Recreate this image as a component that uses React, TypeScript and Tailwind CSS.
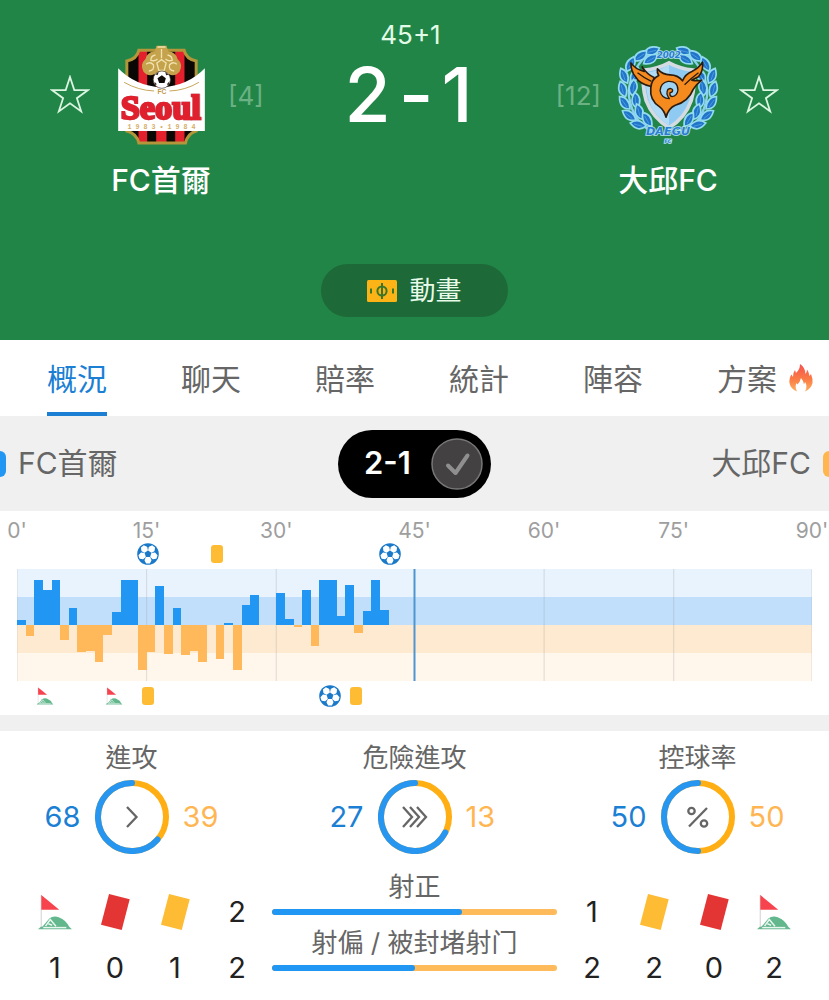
import { useState } from "react";

const SLOTS = 92;

// attack momentum per minute: positive = home, negative = away
const momentum = [
  5, -11, 45, 35, 45, -15, 17, -27, -26, -37, -10, 13, 45, 45, -45, -27, 39, -29, 17, -30, -26, -37, 0, -34, 2, -45,
  20, 30, 0, 0, 32, 6, -2, 35, -21, 45, 45, 9, 40, -8, 14, 45, 15,
];

const axis = [
  { label: "0'", slot: 0 },
  { label: "15'", slot: 15 },
  { label: "30'", slot: 30 },
  { label: "45'", slot: 46 },
  { label: "60'", slot: 61 },
  { label: "75'", slot: 76 },
  { label: "90'", slot: 92 },
];

type EventKind = "goal" | "card" | "corner";

const homeEvents: { kind: EventKind; slot: number }[] = [
  { kind: "goal", slot: 15.2 },
  { kind: "card", slot: 23.2 },
  { kind: "goal", slot: 43.2 },
];

const awayEvents: { kind: EventKind; slot: number }[] = [
  { kind: "corner", slot: 3.2 },
  { kind: "corner", slot: 11.2 },
  { kind: "card", slot: 15.2 },
  { kind: "goal", slot: 36.2 },
  { kind: "card", slot: 39.2 },
];

const tabs = ["概況", "聊天", "賠率", "統計", "陣容", "方案"];

const StarButton = ({ label }: { label: string }) => (
  <button type="button" aria-label={label} className="block size-10">
    <svg viewBox="0 0 40 40" className="size-10" fill="none" stroke="#daf5e0" strokeWidth="1.8">
      <polygon points="20,2 24.3,15.1 38.1,15.1 26.9,23.2 31.2,36.4 20,28.3 8.8,36.4 13.1,23.2 1.9,15.1 15.7,15.1" />
    </svg>
  </button>
);

const SeoulCrest = () => (
  <svg viewBox="0 0 260 300" className="h-[100px] w-[87px]" role="img" aria-label="FC首爾">
    <defs>
      <clipPath id="seoul-shield">
        <path d="M62 16H198Q204 42 234 48V258Q208 266 202 294H62Q56 266 26 258V48Q56 42 62 16Z" />
      </clipPath>
    </defs>
    <g clipPath="url(#seoul-shield)">
      <rect width="260" height="300" fill="#e4202c" />
      <path d="M26 0H61V300H26ZM87 0H114V300H87ZM145 0H171V300H145ZM199 0H234V300H199Z" fill="#0b0705" />
    </g>
    <path
      d="M62 16H198Q204 42 234 48V258Q208 266 202 294H62Q56 266 26 258V48Q56 42 62 16Z"
      fill="none"
      stroke="#b3963a"
      strokeWidth="9"
    />
    <path
      d="M115 2H145L150 18Q174 22 178 42Q196 58 184 80Q170 96 152 88L130 100L108 88Q90 96 76 80Q64 58 82 42Q86 22 110 18Z"
      fill="#c5a24c"
    />
    <g fill="none" stroke="#f1e2ae" strokeWidth="4">
      <path d="M118 6H142M130 12V40M112 30Q98 32 98 46Q110 50 118 42M148 30Q162 32 162 46Q150 50 142 42" />
      <path d="M84 58Q96 48 106 60Q110 76 92 78M176 58Q164 48 154 60Q150 76 168 78" />
      <path d="M116 54L130 44L144 54L138 76H122Z" />
    </g>
    <path d="M0 70Q50 122 130 128Q210 122 260 70V258H0Z" fill="#fff" />
    <circle cx="131" cy="104" r="26" fill="#fff" stroke="#40352c" strokeWidth="2" />
    <path d="M131 91L143 100L139 114H123L118 100Z" fill="#100c0a" />
    <path d="M112 88L122 81L118 91ZM141 81L151 89L144 91ZM109 110L116 118L110 120ZM146 118L154 109L151 121Z" fill="#2a211c" />
    <path d="M18 112Q60 136 108 138M154 138Q202 136 242 112" fill="none" stroke="#c8a658" strokeWidth="3" />
    <text x="131" y="148" textAnchor="middle" fontSize="20" className="font-['Liberation_Sans'] font-bold" fill="#c09a45">
      FC
    </text>
    <text
      x="128"
      y="223"
      fontSize="103"
      textAnchor="middle"
      fill="#e0202d"
      stroke="#e0202d"
      strokeWidth="7"
      className="font-['Liberation_Serif',serif] font-bold drop-shadow-[1px_0_0_#a4a7ad]"
    >
      Seoul
    </text>
    <text x="130" y="251" textAnchor="middle" fontSize="20" className="font-['Liberation_Mono'] font-bold" fill="#d5ad63">
      1 9 8 3 • 1 9 8 4
    </text>
  </svg>
);

// left half of the laurel wreath, mirrored for the right half
const leaves = [
  [106, 15, -15], [72, 30, -35], [102, 40, -30], [42, 54, -60], [20, 90, 70], [56, 88, -60],
  [16, 130, 75], [50, 124, -80], [22, 172, 55], [56, 164, 85], [36, 210, 38], [66, 198, 75],
  [64, 238, 15], [90, 222, 60],
];

const Wreath = () => (
  <g>
    <path d="M112 260Q48 232 36 150Q32 84 92 24" fill="none" stroke="#8cd0f0" strokeWidth="7" />
    {leaves.map(([x, y, r]) => (
      <g key={`${x}-${y}`} transform={`translate(${x} ${y}) rotate(${r})`}>
        <path d="M-25 0Q-6 -24 24 -4Q6 23 -25 0Z" fill="#2174c8" stroke="#92daf0" strokeWidth="5" />
        <path d="M-13 0H13" stroke="#58a8ea" strokeWidth="2" />
      </g>
    ))}
  </g>
);

const DaeguCrest = () => (
  <svg viewBox="0 0 308 294" className="h-[98px] w-[102px]" role="img" aria-label="大邱FC">
    <Wreath />
    <g transform="matrix(-1 0 0 1 308 0)">
      <Wreath />
    </g>
    <path
      d="M157 50Q190 68 230 72Q238 116 224 164Q206 216 157 246Q108 216 88 164Q74 116 82 72Q124 68 157 50Z"
      fill="#8fcaf2"
      stroke="#d5dbe3"
      strokeWidth="11"
    />
    <path d="M157 56V238Q112 210 96 164Q84 118 88 80Q126 76 157 56Z" fill="#c9e8f9" opacity="0.6" />
    <g fill="#f58a1f" stroke="#2b1c10" strokeWidth="5" strokeLinejoin="round">
      <path d="M42 50Q56 70 82 76L76 62Q92 86 112 94L106 122Q68 114 56 92Q42 76 42 50Z" />
      <path d="M258 48Q262 74 246 92L226 102Q242 106 256 102Q240 114 230 130Q216 166 176 178Q156 186 148 214Q142 192 128 182Q98 162 102 126Q104 98 126 88Q120 80 122 68Q138 86 160 86Q184 86 198 104Q206 84 226 76Q248 66 258 48Z" />
      <path d="M62 80Q82 96 104 106M204 116Q222 98 246 80" fill="none" strokeWidth="4" />
    </g>
    <path
      d="M154 106Q184 104 184 132Q182 150 166 152Q158 150 160 140Q168 140 168 132Q164 124 154 130Q146 142 158 158Q134 158 130 134Q132 110 154 106Z"
      fill="#9fd3f3"
      stroke="#2b1c10"
      strokeWidth="4"
      strokeLinejoin="round"
    />
    <g
      className="font-['DejaVu_Sans'] font-bold italic"
      textAnchor="middle"
      fill="#2b7ed0"
      stroke="#b5e1f5"
      strokeWidth="5"
      paintOrder="stroke"
    >
      <text x="156" y="35" fontSize="26">
        2002
      </text>
      <text x="154" y="268" fontSize="34">
        DAEGU
      </text>
      <text x="154" y="292" fontSize="15">
        FC
      </text>
    </g>
  </svg>
);

const PitchIcon = () => (
  <svg viewBox="0 0 30 22" className="h-[22px] w-[30px]" aria-hidden="true">
    <rect width="30" height="22" rx="1.5" fill="#fcb316" />
    <g fill="none" stroke="#39752b" strokeWidth="2">
      <circle cx="15" cy="11" r="4.6" />
      <path d="M15 3V19M4 8.5V13.5M26 8.5V13.5" />
    </g>
  </svg>
);

const FlameIcon = () => (
  <svg viewBox="0 0 24 28" className="h-7 w-6" aria-hidden="true">
    <defs>
      <linearGradient id="flame" x1="0" y1="0" x2="0" y2="1">
        <stop offset="0" stopColor="#f6524f" />
        <stop offset="0.55" stopColor="#fa7b45" />
        <stop offset="1" stopColor="#fdb060" />
      </linearGradient>
    </defs>
    <path
      d="M11 0Q16 3 16.500 10Q18 9 18 5.500Q20 8 20.500 12L22 10Q24 15 23.500 19Q22 25 16 27.500Q19 22 16 18L15 20.500Q14 16 12 14Q11 18 8.500 20.500L7.500 19Q5.500 23 8 27.500Q1.500 25 .5 19Q0 14 2.500 10.500L4 13Q4 8.500 6 6L7 9Q11 5.500 11 0Z"
      fill="url(#flame)"
    />
  </svg>
);

const BallIcon = () => (
  <svg viewBox="0 0 22 22" className="size-[22px]" role="img" aria-label="入球">
    <circle cx="11" cy="11" r="10.8" fill="#1a79c8" />
    <g fill="#fff" stroke="#fff" strokeWidth="1.4" strokeLinejoin="round">
      {[18, 90, 162, 234, 306].map((angle) => (
        <path
          key={angle}
          transform={`rotate(${angle} 11 11)`}
          d="M14.600 9.400L17.200 8.200L19.800 9.600V12.400L17.200 13.800L14.600 12.600Z"
        />
      ))}
    </g>
  </svg>
);

const CornerIcon = ({ className }: { className: string }) => (
  <svg viewBox="0 0 36 38" className={className} role="img" aria-label="角球">
    <path d="M3.500 1V36" stroke="#dcdcdc" strokeWidth="1.400" />
    <path d="M3.500 1L22.500 16.500H3.500Z" fill="#f6434d" />
    <path d="M4 35.500L12 26Q16 22.500 22 24.500Q30 27.500 33.500 35.500Z" fill="#62b78d" />
    <path d="M0 37.200L3 34.500H33L36 37.200Z" fill="#69b791" />
    <path d="M5.500 35.500H30" stroke="#e9f6ef" strokeWidth="1.500" />
    <path d="M8 34L13 27L19 34M11 31.500L15 33" fill="none" stroke="#e9f6ef" strokeWidth="1.600" />
  </svg>
);

const CardIcon = ({ color, label }: { color: string; label: string }) => (
  <svg viewBox="0 0 29 36" className="h-9 w-[29px]" role="img" aria-label={label}>
    <polygon points="8,0 28.700,5.300 20.700,36 0,30.700" fill={color} />
  </svg>
);

const EventRow = ({ events }: { events: { kind: EventKind; slot: number }[] }) => (
  <div className="relative h-[22px]">
    {events.map(({ kind, slot }) => (
      <div
        key={`${kind}-${slot}`}
        className="absolute inset-y-0 flex -translate-x-1/2 items-center"
        style={{ left: `${(slot / SLOTS) * 100}%` }}
      >
        {kind === "goal" && <BallIcon />}
        {kind === "card" && <span className="h-[18px] w-3 rounded-[3px] bg-[#fdbc34]" />}
        {kind === "corner" && <CornerIcon className="h-[18px] w-[17px]" />}
      </div>
    ))}
  </div>
);

const MomentumChart = () => (
  <svg viewBox="0 0 92 112" preserveAspectRatio="none" className="block h-[112px] w-full" role="img" aria-label="攻勢走勢">
    <rect width="92" height="28" fill="#e8f3fe" />
    <rect y="28" width="92" height="28" fill="#c1dffa" />
    <rect y="56" width="92" height="28" fill="#fdead1" />
    <rect y="84" width="92" height="28" fill="#fff6ec" />
    {axis.map(({ slot }) => (
      <path key={slot} d={`M${slot} 0V112`} stroke="#8a8a8a" strokeOpacity="0.25" vectorEffect="non-scaling-stroke" />
    ))}
    <g shapeRendering="crispEdges">
      {momentum.map((value, i) => (
        <rect
          key={i}
          x={i}
          y={value > 0 ? 56 - value : 56}
          width="1"
          height={Math.abs(value)}
          fill={value > 0 ? "#2196f3" : "#ffb95a"}
        />
      ))}
    </g>
    <path d="M46 0V112" stroke="#4f95d0" strokeWidth="2" vectorEffect="non-scaling-stroke" />
  </svg>
);

const ringIcons = {
  attack: <path d="M32 27L41.500 37L32 47" />,
  danger: <path d="M25 27L34 37L25 47M32 27L41 37L32 47M39 27L48 37L39 47" />,
  possession: (
    <>
      <path d="M46 28L28 46.500" />
      <circle cx="30.500" cy="31" r="3.200" />
      <circle cx="43" cy="43.500" r="3.200" />
    </>
  ),
};

const RingStat = ({
  title,
  home,
  away,
  icon,
}: {
  title: string;
  home: number;
  away: number;
  icon: keyof typeof ringIcons;
}) => {
  const awayShare = (away / (home + away)) * 100;

  return (
    <div className="w-[179px]">
      <h3 className="text-center text-[26px] leading-[26px] text-[#666]">{title}</h3>
      <div className="mt-[9px] flex items-center justify-center gap-3.5 text-[29px] leading-9">
        <span className="w-10 text-right text-[#1b80d4]">{home}</span>
        <svg viewBox="0 0 74 74" className="size-[74px] shrink-0" fill="none" aria-hidden="true">
          <circle cx="37" cy="37" r="34" stroke="#ffae13" strokeWidth="6" />
          <circle
            cx="37"
            cy="37"
            r="34"
            stroke="#2796f0"
            strokeWidth="6"
            strokeLinecap="round"
            pathLength="100"
            strokeDasharray={`${100 - awayShare} 100`}
            transform={`rotate(${awayShare * 3.6 - 90} 37 37)`}
          />
          <g stroke="#666" strokeWidth="2.300">
            {ringIcons[icon]}
          </g>
        </svg>
        <span className="w-10 text-[#ffb652]">{away}</span>
      </div>
    </div>
  );
};

const ShotRow = ({ title, home, away }: { title: string; home: number; away: number }) => (
  <div className="flex h-14 items-end">
    <span className="w-16 text-center text-[29px] leading-9">{home}</span>
    <div className="h-14 flex-1 px-[3px]">
      <h3 className="text-center text-[26px] leading-[26px] whitespace-nowrap text-[#666]">{title}</h3>
      <div className="mt-[9px] h-1.5 overflow-hidden rounded-full bg-[#ffba5c]">
        <div className="h-full rounded-r-full bg-[#2196f3]" style={{ width: `${(home / (home + away)) * 100}%` }} />
      </div>
    </div>
    <span className="w-16 text-center text-[29px] leading-9">{away}</span>
  </div>
);

const Counter = ({ kind, count }: { kind: "corner" | "red" | "yellow"; count: number }) => (
  <div className="flex w-[60px] flex-col items-center gap-5">
    {kind === "corner" && <CornerIcon className="h-9 w-[34px]" />}
    {kind === "red" && <CardIcon color="#e43535" label="紅牌" />}
    {kind === "yellow" && <CardIcon color="#fdbc34" label="黃牌" />}
    <span className="text-[29px] leading-9">{count}</span>
  </div>
);

export default function App() {
  const [tab, setTab] = useState("概況");
  const [showScore, setShowScore] = useState(true);

  return (
    <main className="overflow-hidden bg-white font-['Inter','Noto_Sans_CJK_TC',sans-serif] text-[#222]" lang="zh-Hant">
      {/* Scoreboard */}
      <header className="bg-[#228548] pb-[23px] text-white">
        <div className="grid grid-cols-[1fr_auto_1fr] px-[50px]">
          <div className="grid grid-cols-[60px_102px_auto] items-center justify-start pt-11">
            <StarButton label="收藏 FC首爾" />
            <div className="flex h-[102px] items-center justify-center">
              <SeoulCrest />
            </div>
            <span className="pl-4 text-[26px] text-[#6bb183]">[4]</span>
            <h2 className="col-start-2 mt-4 text-center text-[30px] leading-9 font-medium whitespace-nowrap">FC首爾</h2>
          </div>
          <div className="flex flex-col items-center pt-5 pr-2">
            <p className="text-[26px] leading-[30px] text-[#e2fbe6]">45+1</p>
            <p className="flex h-[90px] items-center gap-2 pr-1 text-[75px] leading-[90px] font-medium">
              <span>2</span>
              <span>-</span>
              <span>1</span>
            </p>
          </div>
          <div className="grid grid-cols-[auto_102px_60px] items-center justify-end pt-11">
            <span className="pr-4 text-[26px] text-[#6bb183]">[12]</span>
            <div className="flex h-[102px] items-center justify-center">
              <DaeguCrest />
            </div>
            <div className="flex justify-end">
              <StarButton label="收藏 大邱FC" />
            </div>
            <h2 className="col-start-2 mt-4 text-center text-[30px] leading-9 font-medium whitespace-nowrap">大邱FC</h2>
          </div>
        </div>
        <button
          type="button"
          className="mx-auto mt-[66px] flex h-[53px] w-[187px] items-center justify-center gap-3 rounded-full bg-[#1d6938] text-[26px] text-[#e8fbea]"
        >
          <PitchIcon />
          動畫
        </button>
      </header>

      {/* Tabs */}
      <nav className="flex h-[76px] pl-2.5">
        {tabs.map((name) => (
          <button
            key={name}
            type="button"
            onClick={() => setTab(name)}
            className={`flex items-center justify-center text-[30px] whitespace-nowrap ${
              name === "方案" ? "gap-3 pr-4 pl-[37px]" : "flex-1"
            } ${name === tab ? "text-[#1b80d4]" : "text-[#666]"}`}
          >
            <span
              className={`flex h-full items-center border-b-4 pt-1.5 ${
                name === tab ? "border-b-[#1b80d4]" : "border-b-transparent"
              }`}
            >
              {name}
            </span>
            {name === "方案" && <FlameIcon />}
          </button>
        ))}
      </nav>

      {/* Teams bar */}
      <section className="grid h-[95px] grid-cols-[1fr_auto_1fr] items-center bg-[#f0f0f0] text-[30px] text-[#666]">
        <div className="flex items-center gap-3">
          <span className="-ml-5 h-[26px] w-[26px] rounded-md bg-[#2196f3]" />
          FC首爾
        </div>
        <button
          type="button"
          aria-pressed={showScore}
          onClick={() => setShowScore(!showScore)}
          className="flex h-[68px] w-[153px] items-center justify-between rounded-full bg-black pr-2 pl-[26px] text-[31px] font-semibold text-white"
        >
          <span>2-1</span>
          <svg viewBox="0 0 52 52" className="size-[52px]" fill="none" aria-hidden="true">
            <circle cx="26" cy="26" r="25" fill="#444142" stroke="#777" strokeWidth="1.500" />
            <path d="M17 27.500L24.500 35L36.500 17.500" stroke="#8f8f8f" strokeWidth="4" strokeLinecap="round" strokeLinejoin="round" />
          </svg>
        </button>
        <div className="flex items-center justify-end gap-3">
          大邱FC
          <span className="-mr-5 h-[26px] w-[26px] rounded-md bg-[#ffb74d]" />
        </div>
      </section>

      {/* Timeline */}
      <section className="px-[17px] pt-2 pb-2">
        <div className="relative h-6">
          {axis.map(({ label, slot }) => (
            <span
              key={label}
              className="absolute -translate-x-1/2 text-[21px] leading-6 text-[#9e9e9e]"
              style={{ left: `${(slot / SLOTS) * 100}%` }}
            >
              {label}
            </span>
          ))}
        </div>
        <EventRow events={homeEvents} />
        <div className="py-1">
          <MomentumChart />
        </div>
        <EventRow events={awayEvents} />
      </section>

      <div className="h-4 bg-[#f0f0f0]" />

      {/* Statistics */}
      <section className="pt-3.5 pb-3">
        <div className="flex justify-between px-[42px]">
          <RingStat title="進攻" home={68} away={39} icon="attack" />
          <RingStat title="危險進攻" home={27} away={13} icon="danger" />
          <RingStat title="控球率" home={50} away={50} icon="possession" />
        </div>
        <div className="mt-5 flex px-[25px]">
          <div className="flex pt-5">
            <Counter kind="corner" count={1} />
            <Counter kind="red" count={0} />
            <Counter kind="yellow" count={1} />
          </div>
          <div className="flex-1">
            <ShotRow title="射正" home={2} away={1} />
            <ShotRow title="射偏 / 被封堵射门" home={2} away={2} />
          </div>
          <div className="flex pt-5">
            <Counter kind="yellow" count={2} />
            <Counter kind="red" count={0} />
            <Counter kind="corner" count={2} />
          </div>
        </div>
      </section>
    </main>
  );
}
